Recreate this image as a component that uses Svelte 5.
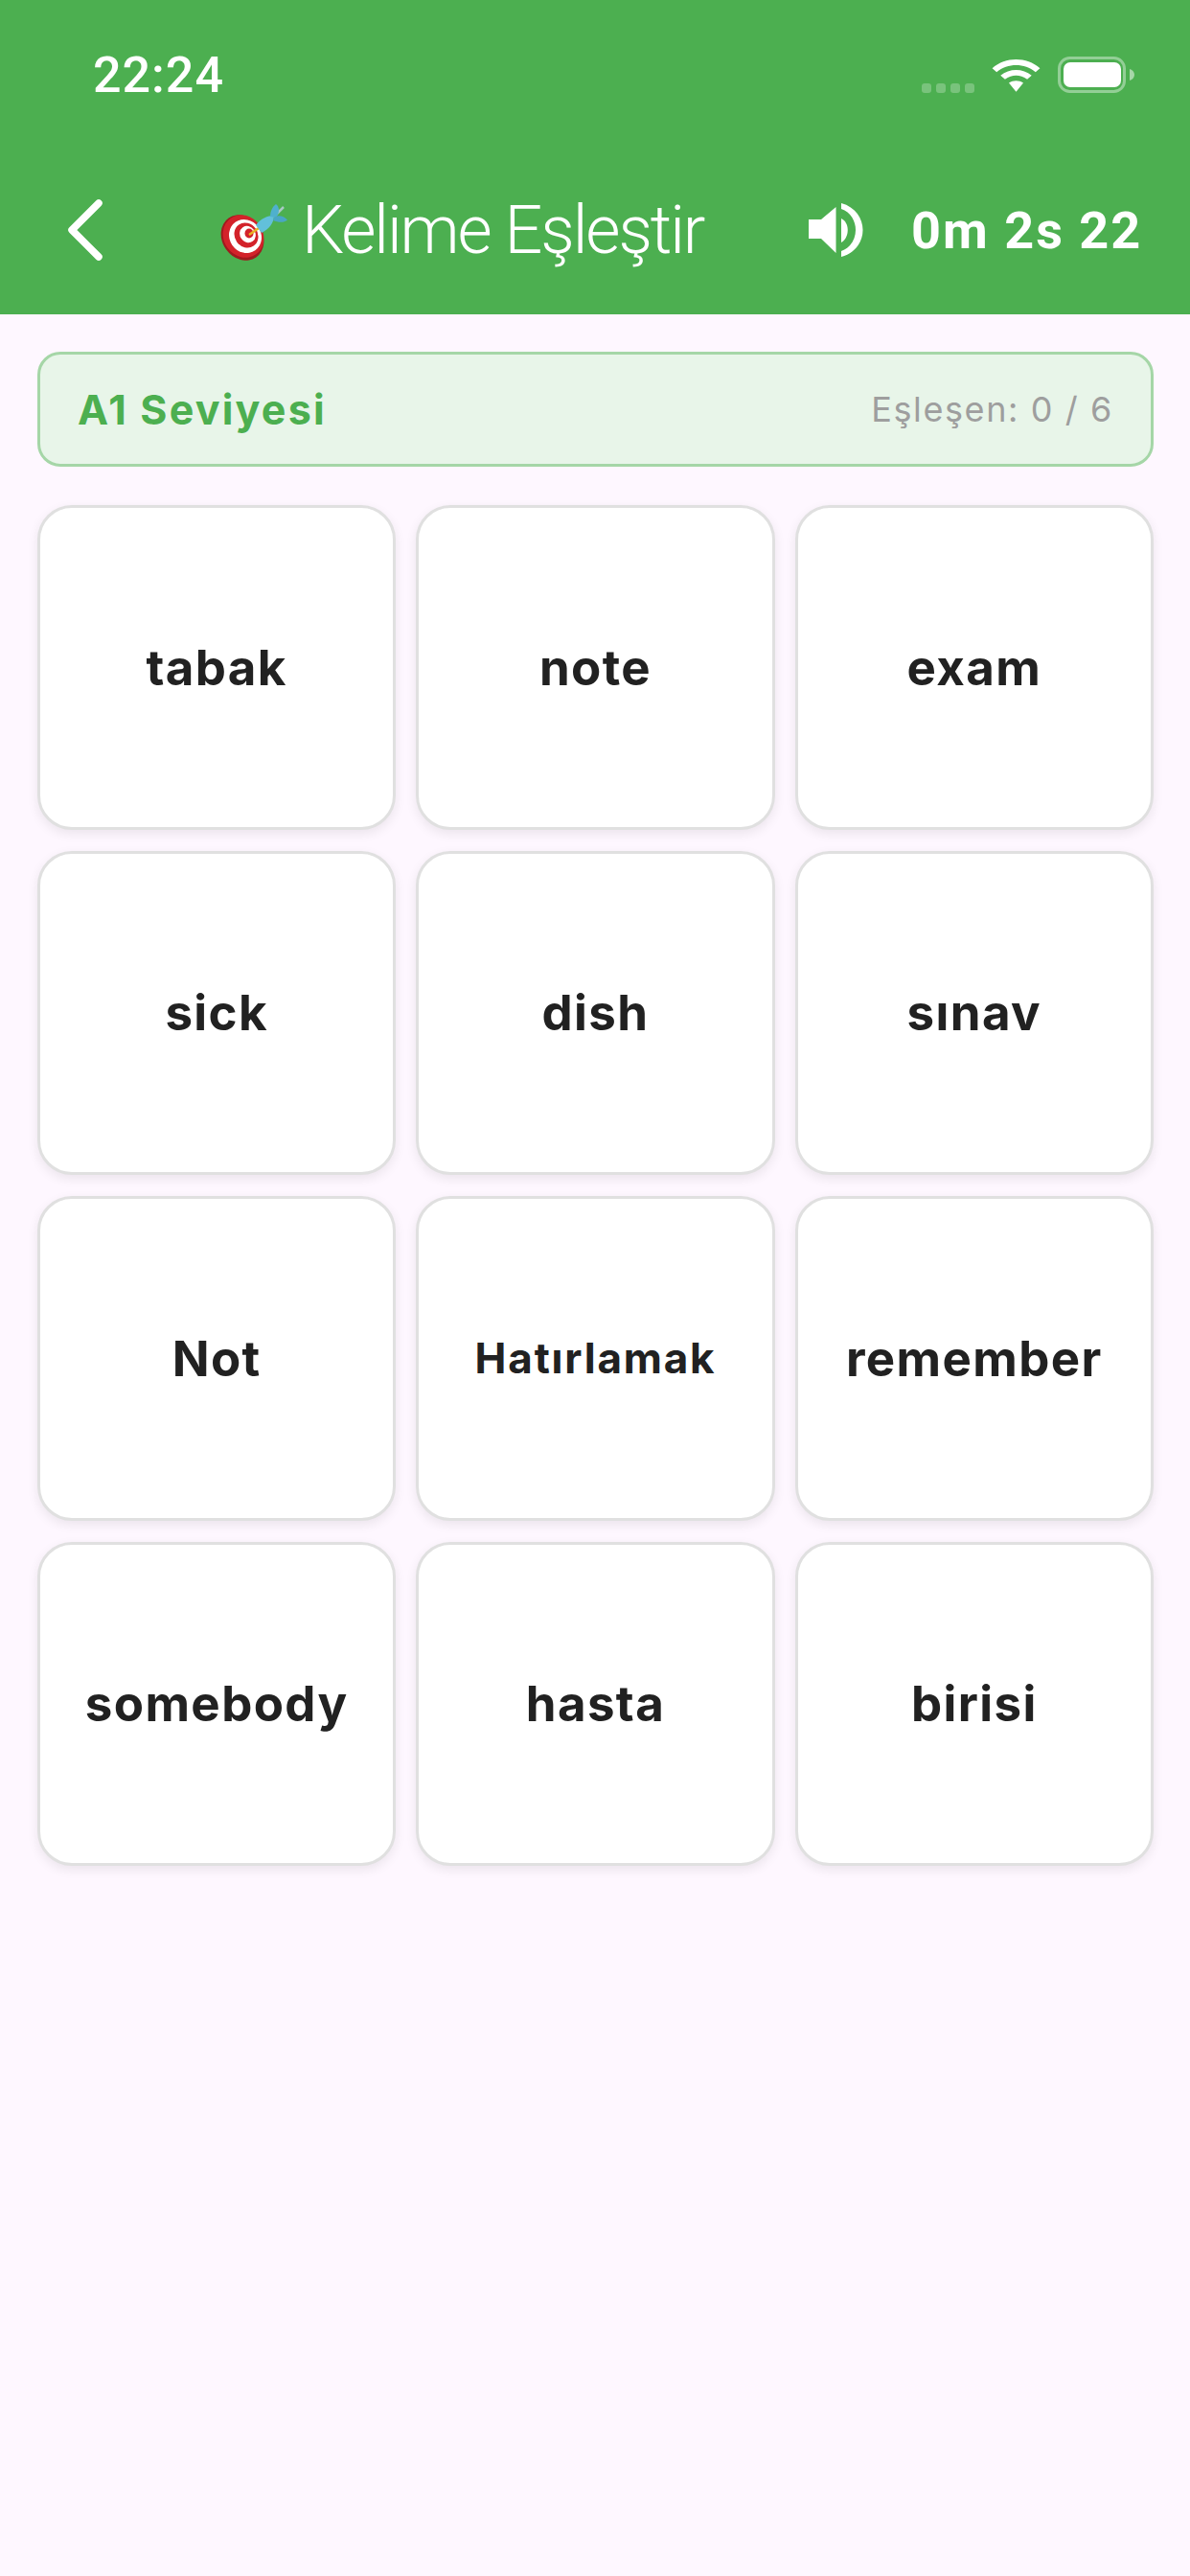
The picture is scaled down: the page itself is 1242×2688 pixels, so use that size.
<script lang="ts">
  const words = [
    'tabak', 'note', 'exam',
    'sick', 'dish', 'sınav',
    'Not', 'Hatırlamak', 'remember',
    'somebody', 'hasta', 'birisi'
  ];
</script>

<div class="page">
  <header class="top">
    <div class="status">
      <span class="time">22:24</span>
      <div class="status-icons">
        <div class="signal"><i></i><i></i><i></i><i></i></div>
        <svg class="wifi" width="51" height="39" viewBox="0 0 44 40" preserveAspectRatio="none">
          <path d="M0.5 13.5 C12.5 1 31.5 1 43.5 13.5 L39.5 17.8 C29.5 7.8 14.5 7.8 4.5 17.8 Z" fill="#fff" />
          <path d="M8 21.2 C16 13.6 28 13.6 36 21.2 L32 25.5 C25.5 19.8 18.500 19.8 12 25.5 Z" fill="#fff" />
          <path d="M15.5 29.2 C19.5 26 24.5 26 28.5 29.2 L22 38.8 Z" fill="#fff" />
        </svg>
        <svg class="battery" width="80" height="38" viewBox="0 0 80 38">
          <rect x="1.5" y="1.5" width="68" height="35" rx="11" fill="none" stroke="#fff" stroke-opacity="0.4" stroke-width="3" />
          <rect x="6" y="6" width="60" height="26" rx="7" fill="#fff" />
          <path d="M75 13 C78.500 14 80 16.500 80 19 C80 21.500 78.500 24 75 25 Z" fill="#fff" fill-opacity="0.5" />
        </svg>
      </div>
    </div>
    <div class="bar">
      <svg class="back" width="38" height="64" viewBox="0 0 38 64">
        <path d="M33 4 L5 32 L33 60" fill="none" stroke="#fff" stroke-width="7.500" stroke-linecap="round" stroke-linejoin="round" />
      </svg>
      <div class="title">
        <svg class="dart" width="72" height="62" viewBox="0 0 72 62">
          <ellipse cx="23" cy="36" rx="21" ry="25" transform="rotate(-35 23 36)" fill="#a01a1e" />
          <ellipse cx="24" cy="34.500" rx="20.500" ry="23" transform="rotate(-35 24 34.500)" fill="#d3222a" />
          <ellipse cx="26" cy="34.500" rx="16.500" ry="18" transform="rotate(-35 26 34.500)" fill="#fff" />
          <ellipse cx="27" cy="33.500" rx="12" ry="13.500" transform="rotate(-35 27 33.500)" fill="#d3222a" />
          <ellipse cx="28.500" cy="32.500" rx="8" ry="9" transform="rotate(-35 28.500 32.500)" fill="#fff" />
          <ellipse cx="30" cy="31.500" rx="4.500" ry="5" fill="#d3222a" />
          <path d="M30 33 L40 26" stroke="#e9b322" stroke-width="2.500" />
          <path d="M66 4 L56 14" stroke="#a9c9c4" stroke-width="2.500" />
          <path d="M37 23 C42 16 49 13 56 13 C56 20 51 27 43 31 Z" fill="#62c0da" />
          <path d="M52 14 C52 9 54 4 58 1 C62 4 62 10 58 15 Z" fill="#4fb0cd" />
          <path d="M56 15 C60 12 66 13 70 17.500 C66 21 60 20 55 18 Z" fill="#49a6c4" />
        </svg>
        <span>Kelime Eşleştir</span>
      </div>
      <svg class="sound" width="58" height="56" viewBox="0 0 58 56">
        <path d="M0 17 H13 L28.500 4 V52 L13 37 H0 Z" fill="#fff" />
        <path d="M34 16 C43 20 43 36 34 41 Z" fill="#fff" />
        <path d="M34 0 C64 8 64 48 34 56 V50 C54 43 54 13 34 6 Z" fill="#fff" />
      </svg>
      <span class="timer">0m 2s 22</span>
    </div>
  </header>

  <main class="content">
    <div class="level">
      <span class="level-name">A1 Seviyesi</span>
      <span class="level-count">Eşleşen: 0 / 6</span>
    </div>
    <div class="grid">
      {#each words as word}
        <div class="card"><span class:small={word === 'Hatırlamak'}>{word}</span></div>
      {/each}
    </div>
  </main>
</div>

<style>
  :global(body) {
    margin: 0;
    background: #fef7ff;
  }

  .page {
    width: 1242px;
    height: 2688px;
    background: #fef7ff;
    overflow: hidden;
  }

  .top {
    height: 328px;
    background: #4caf50;
    color: #fff;
    font-family: Roboto, sans-serif;
  }

  .status {
    height: 192px;
    padding: 0 58px 0 97px;
    display: flex;
    justify-content: space-between;
    align-items: flex-start;
    box-sizing: border-box;
  }

  .time {
    font-size: 52px;
    font-weight: 500;
    line-height: 58px;
    margin-top: 50px;
    letter-spacing: 1px;
  }

  .status-icons {
    display: flex;
    align-items: flex-end;
    margin-top: 58px;
  }

  .signal {
    display: flex;
    gap: 5px;
    margin-right: 18px;
  }

  .signal i {
    width: 10px;
    height: 10px;
    border-radius: 3px;
    background: rgba(255, 255, 255, 0.25);
  }

  .wifi {
    margin-right: 18px;
  }

  .bar {
    height: 96px;
    display: flex;
    align-items: center;
    padding-left: 70px;
    box-sizing: border-box;
  }

  .back {
    flex: none;
  }

  .title {
    display: flex;
    align-items: center;
    margin-left: 122px;
    width: 614px;
    flex: none;
    font-size: 70px;
    font-weight: 340;
    letter-spacing: -2.1px;
  }

  .title span {
    margin-left: 13px;
  }

  .dart {
    flex: none;
    margin-top: 6px;
  }

  .sound {
    flex: none;
  }

  .timer {
    margin-left: 49px;
    font-size: 54px;
    font-weight: 700;
    letter-spacing: 2px;
    white-space: nowrap;
  }

  .content {
    padding: 39px 38px 0 39px;
    font-family: Inter, sans-serif;
  }

  .level {
    height: 120px;
    box-sizing: border-box;
    border: 3px solid #a5d6a7;
    border-radius: 24px;
    background: #e8f5e9;
    padding: 0 39px;
    display: flex;
    align-items: center;
    justify-content: space-between;
  }

  .level-name {
    color: #4caf50;
    font-size: 43px;
    font-weight: 700;
    letter-spacing: 2.2px;
  }

  .level-count {
    color: #9e9e9e;
    font-size: 36px;
    letter-spacing: 1.6px;
  }

  .grid {
    margin-top: 40px;
    display: grid;
    grid-template-columns: repeat(3, 1fr);
    grid-auto-rows: 338.5px;
    column-gap: 21px;
    row-gap: 22px;
  }

  .card {
    box-sizing: border-box;
    background: #fff;
    border: 3px solid #e0e0e0;
    border-radius: 36px;
    box-shadow: 0 4px 12px rgba(0, 0, 0, 0.08);
    display: flex;
    align-items: center;
    justify-content: center;
    color: #212121;
    font-size: 51px;
    font-weight: 700;
    letter-spacing: 1.4px;
  }

  .card .small {
    font-size: 44px;
    letter-spacing: 1.8px;
  }
</style>
